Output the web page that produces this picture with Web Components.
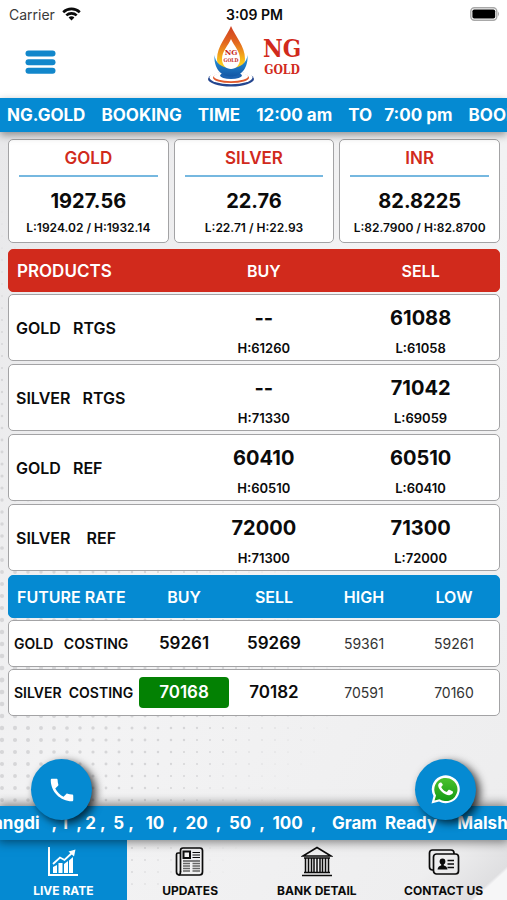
<!DOCTYPE html>
<html lang="en">
<head>
<meta charset="utf-8">
<meta name="viewport" content="width=device-width, initial-scale=1">
<title>NG Gold - Live Rate</title>
<style>
  html, body {
    margin: 0;
  }

  body {
    font-family: Inter, Roboto, "Liberation Sans", sans-serif;
    color: #0b0b0b;
    background: #f0f0f1;
    --blue: #058ad2;
    --red: #d12a1c;
    --line: #a3a3a5;
  }
</style>
</head>
<body>

<gold-app>
  <status-bar carrier="Carrier" time="3:09 PM"></status-bar>
  <app-header></app-header>
  <news-ticker>NG.GOLD    BOOKING    TIME    12:00 am    TO   7:00 pm    BOOKING</news-ticker>

  <main slot="content">
    <spot-board>
      <spot-card name="GOLD" value="1927.56" low="1924.02" high="1932.14"></spot-card>
      <spot-card name="SILVER" value="22.76" low="22.71" high="22.93"></spot-card>
      <spot-card name="INR" value="82.8225" low="82.7900" high="82.8700"></spot-card>
    </spot-board>
    <product-table></product-table>
    <future-table></future-table>
  </main>

  <contact-buttons slot="footer"></contact-buttons>
  <news-ticker slot="footer" class="raised" style="--start: -7px">angdi   , 1  , 2 ,  5 ,   10  ,  20  ,  50  ,  100  ,    Gram  Ready     Malshe</news-ticker>
  <tab-bar slot="footer">
    <tab-item icon="chart" active>LIVE RATE</tab-item>
    <tab-item icon="news">UPDATES</tab-item>
    <tab-item icon="bank">BANK DETAIL</tab-item>
    <tab-item icon="card">CONTACT US</tab-item>
  </tab-bar>
</gold-app>

<script>
/** Helper: attaches an open shadow root and fills it. */
function shadow(el, html) {
  if (!el.shadowRoot) el.attachShadow({ mode: 'open' });
  el.shadowRoot.innerHTML = html;
}

/**
 * gold-app
 * Page shell: top bars, scrolling content, footer, and the dotted backdrop.
 */
class GoldApp extends HTMLElement {
  connectedCallback() {
    shadow(this, `
      <style>
        :host {
          display: flex;
          flex-direction: column;
          position: relative;
          min-height: 100vh;
          overflow: hidden;
          isolation: isolate;
        }

        .backdrop {
          position: absolute;
          inset: 0;
          width: 100%;
          height: 100%;
          z-index: -1;
        }

        .content {
          flex: 1;
          padding: 7px 7px 24px 8px;
        }

        footer {
          position: relative;
        }
      </style>
      <svg class="backdrop" aria-hidden="true">
        <defs>
          <linearGradient id="edge" x1="0" y1="0" x2="1" y2="1">
            <stop offset="0" stop-color="#e6e6e8"/>
            <stop offset="0.5" stop-color="#f3f3f4"/>
            <stop offset="1" stop-color="#ededee"/>
          </linearGradient>
          <linearGradient id="fold" x1="0" y1="0" x2="1" y2="1">
            <stop offset="0.5" stop-color="#eeeeef"/>
            <stop offset="0.83" stop-color="#dfdfe1"/>
            <stop offset="0.85" stop-color="#f6f6f7"/>
          </linearGradient>
        </defs>
        <rect width="100%" height="100%" fill="url(#edge)"/>
        <svg x="100%" y="100%" overflow="visible"><path d="M-110 0L0 -100V0Z" fill="url(#fold)"/></svg>
        <g fill="#d6d6d8">${this.dots()}</g>
      </svg>
      <slot></slot>
      <div class="content"><slot name="content"></slot></div>
      <footer><slot name="footer"></slot></footer>
    `);
  }

  /** Halftone pattern, largest at the left edge and fading to the right. */
  dots() {
    let out = '';
    for (let row = 0; row < 58; row++) {
      for (let col = 0; col < 27; col++) {
        const x = 2 + col * 13;
        const y = 200 + row * 12;
        const r = 2.4 - col * 0.07 - Math.abs(y - 680) / 240;
        if (r > 0.4) out += `<circle cx="${x}" cy="${y}" r="${r.toFixed(2)}"/>`;
      }
    }
    return out;
  }
}

/**
 * status-bar
 *
 * Attributes:
 *   - carrier (string): network name
 *   - time (string): clock text
 */
class StatusBar extends HTMLElement {
  connectedCallback() {
    shadow(this, `
      <style>
        :host {
          display: grid;
          grid-template-columns: 1fr auto 1fr;
          align-items: center;
          height: 28px;
          padding: 0 7px 0 9px;
          background: #fff;
          font-size: 14px;
        }

        .carrier {
          display: flex;
          align-items: center;
          gap: 7px;
          color: #3a3a3a;
        }

        .time {
          font-weight: 600;
        }

        .battery {
          justify-self: end;
        }
      </style>
      <span class="carrier">${this.getAttribute('carrier')}
        <svg width="19" height="14" viewBox="0 0 19 14" fill="none" stroke="#0b0b0b" stroke-width="2.6" aria-hidden="true">
          <path d="M1.2 5.2A12 12 0 0 1 17.8 5.2"/>
          <path d="M4.3 8.4A7.6 7.6 0 0 1 14.7 8.4"/>
          <path d="M6.6 10.6A4 4 0 0 1 12.4 10.6L9.5 13.6Z" fill="#0b0b0b" stroke="none"/>
        </svg>
      </span>
      <span class="time">${this.getAttribute('time')}</span>
      <svg class="battery" width="30" height="14" viewBox="0 0 30 14" aria-hidden="true">
        <rect x="0.8" y="0.8" width="26" height="12.4" rx="3.6" fill="#fff" stroke="#a8a8a8" stroke-width="1.4"/>
        <rect x="2.4" y="2.4" width="22.8" height="9.2" rx="1.8" fill="#000"/>
        <path d="M28 4.6Q30 7 28 9.4Z" fill="#a8a8a8"/>
      </svg>
    `);
  }
}

/**
 * app-header
 * Menu button and the brand logo.
 */
class AppHeader extends HTMLElement {
  connectedCallback() {
    shadow(this, `
      <style>
        :host {
          display: grid;
          grid-template-columns: 1fr auto 1fr;
          align-items: center;
          height: 70px;
          padding: 0 25px;
          background: #fff;
        }

        button {
          justify-self: start;
          display: block;
          padding: 0 0 3px;
          border: 0;
          background: none;
        }

        .logo {
          display: block;
          overflow: visible;
          font-family: "DejaVu Serif Condensed", "DejaVu Serif", serif;
          font-weight: 700;
        }
      </style>
      <button type="button" aria-label="Menu">
        <svg width="31" height="24" viewBox="0 0 31 24" fill="#1287cb" style="display:block">
          <rect x="0.5" y="0.5" width="30" height="6" rx="3"/>
          <rect x="0.5" y="9.2" width="30" height="6" rx="3"/>
          <rect x="0.5" y="17.8" width="30" height="6" rx="3"/>
        </svg>
      </button>
      <svg class="logo" width="94" height="70" viewBox="0 0 94 70" role="img" aria-label="NG Gold">
        <defs>
          <linearGradient id="flame" x1="0" y1="0" x2="0" y2="1">
            <stop offset="0" stop-color="#cf3f22"/>
            <stop offset="0.35" stop-color="#e2661f"/>
            <stop offset="0.75" stop-color="#f9c21a"/>
            <stop offset="1" stop-color="#fde03a"/>
          </linearGradient>
          <linearGradient id="water" x1="0" y1="0" x2="0" y2="1">
            <stop offset="0" stop-color="#2a9be0"/>
            <stop offset="1" stop-color="#1257a5"/>
          </linearGradient>
        </defs>
        <ellipse cx="24" cy="51" rx="23" ry="7.5" fill="#24468f"/>
        <ellipse cx="24" cy="49.600" rx="21.500" ry="6.700" fill="#fff"/>
        <ellipse cx="24" cy="49.800" rx="18" ry="5.300" fill="#e0592b"/>
        <ellipse cx="24" cy="48.600" rx="17" ry="4.600" fill="#fff"/>
        <ellipse cx="24" cy="47.500" rx="11" ry="3.500" fill="#1b62b0"/>
        <path d="M24 -2C20 8 10 18 10 31C10 40 16 45 24 45S38 40 38 31C38 18 28 8 24 -2Z" fill="url(#flame)"/>
        <path d="M7.500 27C8 34 14 40 24 40S40 34 40.500 27C41.500 40 34 48.500 24 48.500S6.500 40 7.500 27Z" fill="url(#water)"/>
        <path d="M24 11C21 18 15 23 15 31C15 37 19 41 24 41S33 37 33 31C33 23 27 18 24 11Z" fill="#fff"/>
        <text x="24" y="27" font-size="8" text-anchor="middle" fill="#c8281c">NG</text>
        <text x="24" y="34" font-size="5" text-anchor="middle" fill="#c8281c">GOLD</text>
        <text x="75" y="29" font-size="24" text-anchor="middle" fill="#d12a1c">NG</text>
        <text x="75" y="46" font-size="12" text-anchor="middle" fill="#d12a1c">GOLD</text>
      </svg>
    `);
  }
}

/**
 * news-ticker
 * One line of running text, clipped at the screen edges.
 * --start is the current scroll position.
 */
class NewsTicker extends HTMLElement {
  connectedCallback() {
    shadow(this, `
      <style>
        :host {
          display: block;
          position: relative;
          box-shadow: 0 3px 8px rgba(0, 0, 0, 0.4);
        }

        :host(.raised) {
          box-shadow: 0 0 10px 2px rgba(0, 0, 0, 0.5);
        }

        .line {
          overflow: hidden;
          background: var(--blue);
          color: #fff;
          font-size: 17px;
          font-weight: 700;
          line-height: 34px;
          white-space: pre;
          text-indent: var(--start, 7px);
        }
      </style>
      <div class="line"><slot></slot></div>
    `);
  }
}

/**
 * spot-board
 * Equal-width row of spot-card elements.
 */
class SpotBoard extends HTMLElement {
  connectedCallback() {
    shadow(this, `
      <style>
        :host {
          display: grid;
          grid-template-columns: repeat(3, 1fr);
          gap: 5px;
        }
      </style>
      <slot></slot>
    `);
  }
}

/**
 * spot-card
 *
 * Attributes:
 *   - name, value, low, high (string)
 */
class SpotCard extends HTMLElement {
  connectedCallback() {
    const get = name => this.getAttribute(name);
    shadow(this, `
      <style>
        :host {
          display: block;
          padding: 8px 10px;
          border: 1px solid var(--line);
          border-radius: 5px;
          background: #fff;
          text-align: center;
          white-space: nowrap;
        }

        h2 {
          margin: 0;
          padding-bottom: 7px;
          border-bottom: 2px solid #76b8e0;
          color: var(--red);
          font-size: 17px;
          font-weight: 600;
          line-height: 20px;
        }

        .value {
          margin: 12px 0 9px;
          font-size: 20px;
          font-weight: 700;
          line-height: 24px;
        }

        .range {
          margin: 0 -6px;
          font-size: 12px;
          font-weight: 600;
          line-height: 12px;
        }
      </style>
      <h2>${get('name')}</h2>
      <div class="value">${get('value')}</div>
      <div class="range">L:${get('low')} / H:${get('high')}</div>
    `);
  }
}

/**
 * product-table
 * Buy and sell prices with the day's high and low below them.
 */
class ProductTable extends HTMLElement {
  connectedCallback() {
    const rows = [
      ['GOLD   RTGS', '--', '61260', '61088', '61058'],
      ['SILVER   RTGS', '--', '71330', '71042', '69059'],
      ['GOLD   REF', '60410', '60510', '60510', '60410'],
      ['SILVER    REF', '72000', '71300', '71300', '72000']
    ];

    shadow(this, `
      <style>
        :host {
          display: block;
          margin-top: 6px;
        }

        table {
          display: grid;
          gap: 2px;
        }

        thead, tbody {
          display: grid;
          gap: 3px;
        }

        tr {
          display: grid;
          grid-template-columns: 9fr 8fr 8fr;
          align-items: center;
          box-sizing: border-box;
          height: 67px;
          border: 1px solid var(--line);
          border-radius: 5px;
          background: #fff;
        }

        thead tr {
          height: 43px;
          border-color: var(--red);
          background: var(--red);
          color: #fff;
        }

        th, td {
          padding: 0;
          text-align: center;
          font-size: 16px;
          font-weight: 600;
        }

        td {
          padding-top: 6px;
        }

        th:first-child {
          padding-left: 7px;
          text-align: left;
          white-space: pre;
        }

        thead th:first-child {
          padding-left: 8px;
          font-size: 17px;
        }

        .price {
          font-size: 20px;
          font-weight: 700;
          line-height: 24px;
        }

        .limit {
          margin-top: 10px;
          font-size: 13px;
          line-height: 16px;
        }
      </style>
      <table>
        <thead>
          <tr><th scope="col">PRODUCTS</th><th scope="col">BUY</th><th scope="col">SELL</th></tr>
        </thead>
        <tbody>
          ${rows.map(([name, buy, high, sell, low]) => `
            <tr>
              <th scope="row">${name}</th>
              <td><div class="price">${buy}</div><div class="limit">H:${high}</div></td>
              <td><div class="price">${sell}</div><div class="limit">L:${low}</div></td>
            </tr>`).join('')}
        </tbody>
      </table>
    `);
  }
}

/**
 * future-table
 * Costing rates. A price that has just risen is marked green.
 */
class FutureTable extends HTMLElement {
  connectedCallback() {
    const rows = [
      { name: 'GOLD   COSTING', buy: '59261', sell: '59269', high: '59361', low: '59261' },
      { name: 'SILVER  COSTING', buy: '70168', sell: '70182', high: '70591', low: '70160', up: true }
    ];

    shadow(this, `
      <style>
        :host {
          display: block;
          margin-top: 4px;
        }

        table, thead, tbody {
          display: grid;
          gap: 2px;
        }

        tr {
          display: grid;
          grid-template-columns: 13fr 9fr 9fr 9fr 9fr;
          align-items: center;
          box-sizing: border-box;
          height: 47px;
          border: 1px solid var(--line);
          border-radius: 5px;
          background: #fff;
        }

        thead tr {
          height: 43px;
          border-color: var(--blue);
          background: var(--blue);
          color: #fff;
        }

        th, td {
          padding: 0;
          text-align: center;
          font-size: 14px;
          font-weight: 400;
        }

        th {
          font-weight: 600;
        }

        thead th {
          font-size: 16px;
        }

        th:first-child {
          padding-left: 5px;
          text-align: left;
          white-space: pre;
        }

        thead th:first-child {
          padding-left: 8px;
        }

        td {
          color: #333;
        }

        .main {
          color: #0b0b0b;
          font-size: 17px;
          font-weight: 600;
          line-height: 31px;
        }

        .up {
          border-radius: 4px;
          background: #038103;
          color: #fff;
        }
      </style>
      <table>
        <thead>
          <tr>
            <th scope="col">FUTURE RATE</th><th scope="col">BUY</th><th scope="col">SELL</th>
            <th scope="col">HIGH</th><th scope="col">LOW</th>
          </tr>
        </thead>
        <tbody>
          ${rows.map(r => `
            <tr>
              <th scope="row">${r.name}</th>
              <td class="main ${r.up ? 'up' : ''}">${r.buy}</td>
              <td class="main">${r.sell}</td>
              <td>${r.high}</td>
              <td>${r.low}</td>
            </tr>`).join('')}
        </tbody>
      </table>
    `);
  }
}

/**
 * contact-buttons
 * Round call and WhatsApp buttons floating over the footer ticker.
 */
class ContactButtons extends HTMLElement {
  connectedCallback() {
    shadow(this, `
      <style>
        :host {
          display: flex;
          justify-content: space-between;
          position: absolute;
          top: -47px;
          left: 31px;
          right: 31px;
          z-index: 2;
          pointer-events: none;
        }

        button {
          display: grid;
          place-items: center;
          width: 61px;
          height: 61px;
          padding: 0;
          border: 0;
          border-radius: 50%;
          background: var(--blue);
          box-shadow: 4px 3px 9px rgba(0, 0, 0, 0.75);
          pointer-events: auto;
        }
      </style>
      <button type="button" aria-label="Call">
        <svg width="30" height="30" viewBox="0 0 24 24" fill="#fff">
          <path d="M6.620 10.790c1.440 2.830 3.760 5.140 6.590 6.590l2.200-2.200c.27-.27.67-.36 1.020-.24 1.120.37 2.330.57 3.570.57.55 0 1 .45 1 1V20c0 .55-.45 1-1 1-9.390 0-17-7.610-17-17 0-.55.45-1 1-1h3.500c.55 0 1 .45 1 1 0 1.250.2 2.450.57 3.570.11.35.03.74-.25 1.020l-2.200 2.200z"/>
        </svg>
      </button>
      <button type="button" aria-label="WhatsApp">
        <svg width="29" height="29" viewBox="0 0 29 29">
          <defs>
            <linearGradient id="wa" x1="0" y1="0" x2="0" y2="1">
              <stop offset="0" stop-color="#4cc22e"/>
              <stop offset="1" stop-color="#159a14"/>
            </linearGradient>
          </defs>
          <path d="M0.500 28.500L2.500 21A14 14 0 1 1 8 26.500Z" fill="#fff"/>
          <path d="M3.500 25.600L5 20.600A11.600 11.600 0 1 1 8.500 24.200Z" fill="url(#wa)"/>
          <path d="M10.800 8.200c-.4-.8-.9-.8-1.400-.8-1.500.3-2.300 1.800-2.200 3.400.2 1.900 1.600 4 3.600 5.900 2.300 2.200 5.200 3.600 7.500 3.500 1.700-.1 3.500-1.200 3.700-2.600.1-.8 0-1.100-.5-1.400l-3-1.400c-.5-.2-.8-.1-1.100.3l-1.200 1.500c-.3.4-.6.4-1.100.2-2.200-1-3.700-2.500-4.700-4.300-.2-.4-.1-.7.200-1l.9-1.100c.3-.4.300-.7.200-1.100Z" fill="#fff"/>
        </svg>
      </button>
    `);
  }
}

/**
 * tab-bar
 * Bottom navigation.
 */
class TabBar extends HTMLElement {
  connectedCallback() {
    shadow(this, `
      <style>
        nav {
          display: grid;
          grid-template-columns: repeat(4, 1fr);
        }
      </style>
      <nav><slot></slot></nav>
    `);
  }
}

const ICONS = {
  chart: `
    <g fill="currentColor">
      <path d="M1 1H3V28H31V30H1Z"/>
      <path d="M6 21L10 19V27H6ZM11.500 17H15.500V27H11.500ZM17 18L21 15V27H17ZM22 14.500L26 11V27H22Z"/>
    </g>
    <path d="M6 18L13 11.500L17.500 14L26 6" fill="none" stroke="currentColor" stroke-width="1.800"/>
    <path d="M21.500 5.500L28.500 3.500L27 10.500Z" fill="currentColor"/>`,
  news: `
    <g fill="none" stroke="currentColor" stroke-width="1.700">
      <path d="M6.500 26V4.500Q6.500 2 9 2H26Q28.500 2 28.500 4.500V26Q28.500 29 25.500 29H5.500Q2.500 29 2.500 26V8.500Q2.500 7 4 7H6.500"/>
      <path d="M6.500 25.500Q6.500 29 4.500 29"/>
      <rect x="9.500" y="5.500" width="6.500" height="6.500" stroke-width="2"/>
      <path d="M18.500 6.500H26M18.500 9H26M18.500 11.500H26M9 15H26" stroke-width="1.100"/>
      <path d="M9 17.500H16M9 20H16M9 22.500H16M9 25H16M18.500 17.500H26M18.500 20H26M18.500 22.500H26M18.500 25H26" stroke-width="1.400" stroke="#666"/>
    </g>`,
  bank: `
    <g fill="none" stroke="currentColor" stroke-width="1.500">
      <path d="M2 10L16 1.500L30 10Z"/>
      <path d="M3 12H29M3 26.500H29M1 29.500H31"/>
      <path d="M4.500 12V26M7.500 12V26M10.500 12V26M13 12V26M16 12V26M19 12V26M21.500 12V26M24.500 12V26M27.500 12V26"/>
    </g>`,
  card: `
    <g fill="none" stroke="currentColor" stroke-width="1.700">
      <rect x="5.500" y="8" width="25" height="20" rx="3"/>
      <path d="M5.500 24H4.500Q1.500 24 1.500 21V7Q1.500 4 4.500 4H23Q26 4 26 7V8"/>
      <path d="M19.500 14.500H26M19.500 18H26M19.500 21.500H26" stroke-width="1.500"/>
    </g>
    <circle cx="14.500" cy="15.500" r="2.900" fill="currentColor"/>
    <path d="M9.500 23.500Q10 20 13.200 19.500V17H15.800V19.500Q19 20 19.500 23.500Z" fill="currentColor"/>`
};

/**
 * tab-item
 *
 * Attributes:
 *   - icon (string): key of ICONS
 *   - active (boolean): current page
 */
class TabItem extends HTMLElement {
  connectedCallback() {
    shadow(this, `
      <style>
        :host {
          display: block;
        }

        a {
          display: flex;
          flex-direction: column;
          align-items: center;
          gap: 5px;
          padding: 6px 0 1px;
          color: #0b0b0b;
          font-size: 12px;
          font-weight: 700;
          line-height: 16px;
          text-decoration: none;
          white-space: nowrap;
        }

        :host([active]) a {
          background: var(--blue);
          color: #fff;
        }
      </style>
      <a href="#${this.getAttribute('icon')}">
        <svg width="32" height="32" viewBox="0 0 32 32" aria-hidden="true">${ICONS[this.getAttribute('icon')]}</svg>
        <span><slot></slot></span>
      </a>
    `);
  }
}

// Register the custom elements
customElements.define('gold-app', GoldApp);
customElements.define('status-bar', StatusBar);
customElements.define('app-header', AppHeader);
customElements.define('news-ticker', NewsTicker);
customElements.define('spot-board', SpotBoard);
customElements.define('spot-card', SpotCard);
customElements.define('product-table', ProductTable);
customElements.define('future-table', FutureTable);
customElements.define('contact-buttons', ContactButtons);
customElements.define('tab-bar', TabBar);
customElements.define('tab-item', TabItem);
</script>
</body>
</html>
